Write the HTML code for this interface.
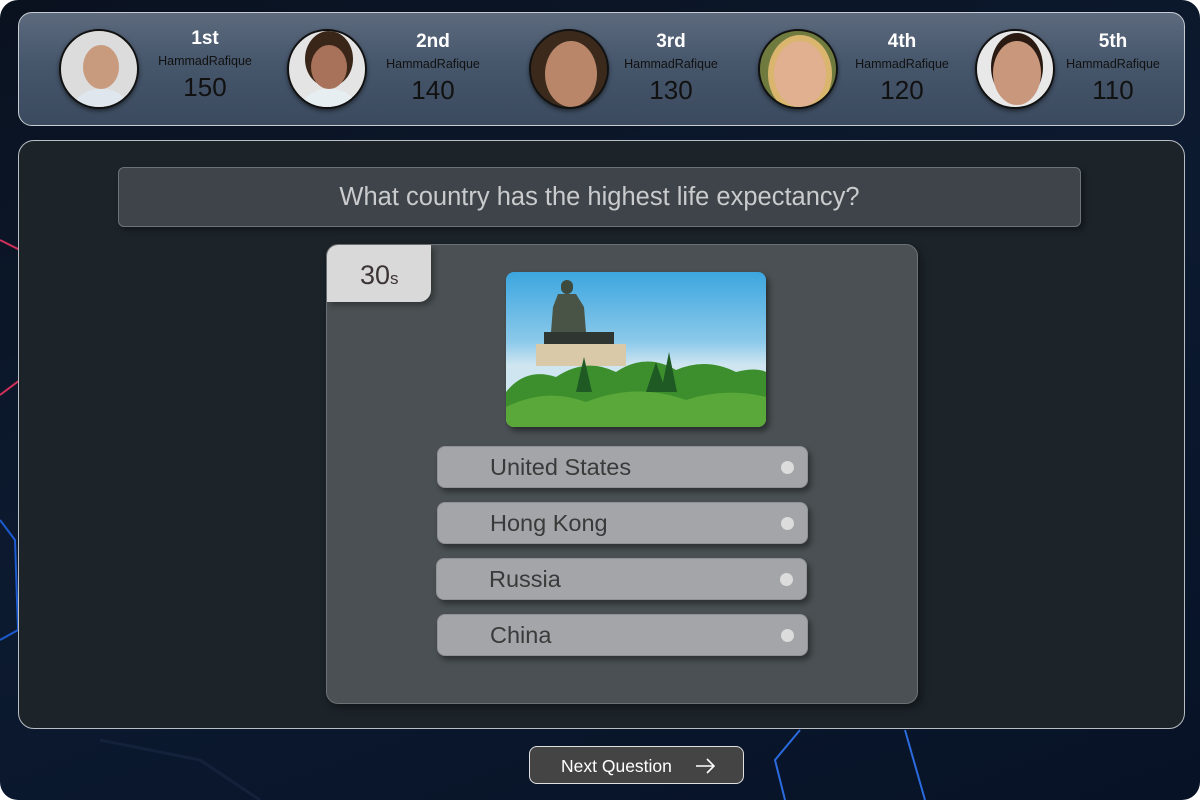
<!DOCTYPE html>
<html><head><meta charset="utf-8"><style>
*{margin:0;padding:0;box-sizing:border-box}
body{width:1200px;height:800px;background:#fff;font-family:"Liberation Sans",sans-serif;overflow:hidden}
.page{position:absolute;left:0;top:0;width:1200px;height:800px;border-radius:18px;overflow:hidden;background:linear-gradient(160deg,#0a1220 0%,#0c1a30 50%,#071226 100%)}
.lb{position:absolute;left:18px;top:12px;width:1167px;height:114px;border:1px solid #c8ccd2;border-radius:14px;background:linear-gradient(180deg,#5d6a7e 0%,#46566b 45%,#3b4a5e 100%)}
.av{position:absolute;width:80px;height:80px;border-radius:50%;border:2px solid #111;top:16px;overflow:hidden;box-shadow:0 2px 4px rgba(0,0,0,.5)}
.av .h{position:absolute;left:22px;top:14px;width:36px;height:44px;border-radius:50%;background:#c89a7e}
.av .b{position:absolute;left:8px;top:58px;width:64px;height:40px;border-radius:30px 30px 0 0;background:#dfe6ee}
.tx{position:absolute;top:14px;width:130px;text-align:center;color:#111}
.tx .r{font-weight:bold;font-size:19px;color:#fff;line-height:24px}
.tx .n{font-size:12.5px;line-height:20px}
.tx .s{font-size:26px;line-height:32px}
.main{position:absolute;left:18px;top:140px;width:1167px;height:589px;background:#1c2329;border:1px solid #b9bec4;border-radius:16px}
.q{position:absolute;left:99px;top:26px;width:963px;height:60px;background:#3e4449;border:1px solid #6d7378;border-radius:6px;color:#c9cbcd;font-size:25.5px;text-align:center;line-height:58px;box-shadow:3px 3px 6px rgba(0,0,0,.4)}
.card{position:absolute;left:307px;top:103px;width:592px;height:460px;background:#4a5053;border:1px solid #6b7174;border-radius:12px;box-shadow:3px 4px 8px rgba(0,0,0,.4)}
.tm{position:absolute;left:0;top:0;width:104px;height:57px;background:#d9d9d9;border-radius:11px 0 12px 0;color:#3d3535;font-size:27px;line-height:60px;padding-left:33px;box-shadow:3px 3px 6px rgba(0,0,0,.35)}
.tm small{font-size:17px}
.img{position:absolute;left:179px;top:27px;width:260px;height:155px;border-radius:8px;overflow:hidden;background:linear-gradient(180deg,#3ca6df 0%,#8cc9ea 45%,#cfe6f1 60%);box-shadow:3px 4px 6px rgba(0,0,0,.45)}
.opt{position:absolute;left:110px;width:371px;height:42px;background:#a3a5a8;border:1px solid #8f9296;border-radius:8px;color:#3a3a3a;font-size:23.5px;line-height:41px;padding-left:52px;box-shadow:3px 4px 6px rgba(0,0,0,.4)}
.opt i{position:absolute;right:13px;top:14px;width:13px;height:13px;border-radius:50%;background:#dcdcdc}
.btn{position:absolute;left:529px;top:746px;width:215px;height:38px;background:#444;border:1px solid #e0e0e0;border-radius:8px;color:#fff;font-size:17.5px;line-height:38px;padding-left:31px}
</style></head><body><div class="page">
<svg width="1200" height="800" style="position:absolute;left:0;top:0" fill="none">
<path d="M0 240 L20 250 L20 380 L0 395" stroke="#d0305a" stroke-width="2"/>
<path d="M0 520 L15 540 L18 630 L0 640" stroke="#1d5bd0" stroke-width="2"/>
<path d="M800 730 L775 760 L785 800" stroke="#2a6be0" stroke-width="2"/>
<path d="M905 730 L925 800" stroke="#2a6be0" stroke-width="2"/>
<path d="M100 740 L200 760 L260 800" stroke="#13223a" stroke-width="3"/>
</svg>
<div class="lb">
<div class="av" style="left:40px;background:#dcdcdc"><div class="h"></div><div class="b"></div></div>
<div class="tx" style="left:121px"><div class="r">1st</div><div class="n">HammadRafique</div><div class="s">150</div></div>
<div class="av" style="left:268px;background:#e4e4e4"><div class="h" style="background:#a7715a;box-shadow:0 -8px 0 6px #3a2618"></div><div class="b" style="background:#e6eef2"></div></div>
<div class="tx" style="left:349px;top:17px"><div class="r">2nd</div><div class="n">HammadRafique</div><div class="s">140</div></div>
<div class="av" style="left:510px;background:#3b2a1c"><div class="h" style="left:14px;top:10px;width:52px;height:66px;background:#b9866a"></div></div>
<div class="tx" style="left:587px;top:17px"><div class="r">3rd</div><div class="n">HammadRafique</div><div class="s">130</div></div>
<div class="av" style="left:739px;background:#6f7a3e"><div class="h" style="left:14px;top:10px;width:52px;height:66px;background:#e1b091;box-shadow:0 0 0 6px #d9b56e"></div></div>
<div class="tx" style="left:818px;top:17px"><div class="r">4th</div><div class="n">HammadRafique</div><div class="s">120</div></div>
<div class="av" style="left:956px;background:#e8e8e8"><div class="h" style="left:16px;top:10px;width:48px;height:64px;background:#c9977c;box-shadow:0 -6px 0 2px #2a1a12"></div></div>
<div class="tx" style="left:1029px;top:17px"><div class="r">5th</div><div class="n">HammadRafique</div><div class="s">110</div></div>
</div>
<div class="main">
<div class="q">What country has the highest life expectancy?</div>
<div class="card">
<div class="tm">30<small>s</small></div>
<div class="img">
<svg width="260" height="155">
<rect x="55" y="8" width="12" height="14" rx="6" fill="#3e4a3e"/>
<path d="M52 22 L70 22 L78 35 L80 60 L45 60 L47 35 Z" fill="#4a5446"/>
<rect x="38" y="60" width="70" height="12" fill="#2f3530"/>
<rect x="30" y="72" width="90" height="22" fill="#d9c9a8"/>
<path d="M0 120 Q20 95 50 105 Q80 85 110 100 Q140 80 170 98 Q200 85 230 100 Q250 95 260 100 L260 155 L0 155 Z" fill="#3c8f2c"/>
<path d="M0 135 Q40 115 80 130 Q130 110 180 128 Q220 115 260 125 L260 155 L0 155 Z" fill="#5aa83a"/>
<path d="M70 120 L78 85 L86 120 Z M140 120 L150 90 L160 120 Z M155 120 L163 80 L171 120Z" fill="#1f5a24"/>
</svg></div>
<div class="opt" style="top:201px">United States<i></i></div>
<div class="opt" style="top:257px">Hong Kong<i></i></div>
<div class="opt" style="top:313px;left:109px">Russia<i></i></div>
<div class="opt" style="top:369px">China<i></i></div>
</div>
</div>
<div class="btn">Next Question
<svg width="22" height="16" style="position:absolute;left:165px;top:11px" fill="none" stroke="#fff" stroke-width="1.6"><path d="M1 8 H19 M12 1 L19 8 L12 15"/></svg></div>
</div></body></html>
